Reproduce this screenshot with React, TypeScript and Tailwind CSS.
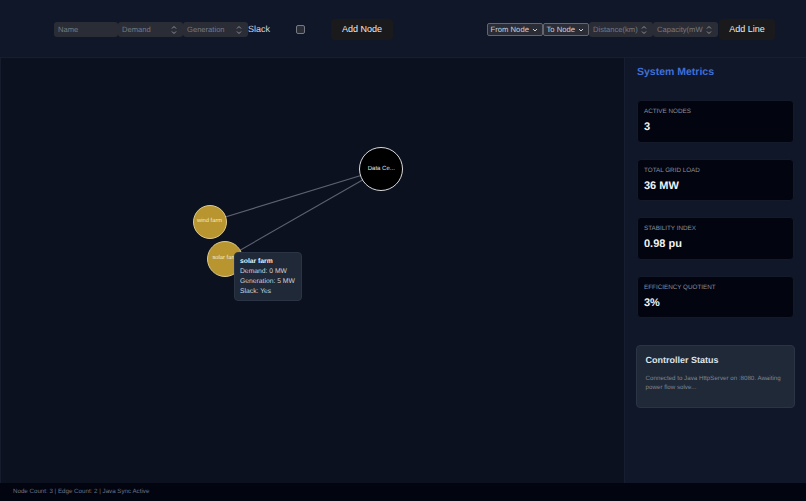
import React from "react";

function Spin() {
  return (
    <svg width="6" height="10" viewBox="0 0 6 10" fill="none" stroke="#9a9ca3" strokeWidth="0.9" className="shrink-0">
      <path d="M1 3.5 L3 1.5 L5 3.5" />
      <path d="M1 6.5 L3 8.5 L5 6.5" />
    </svg>
  );
}

function NumField({ label, w }: { label: string; w: string }) {
  return (
    <div className={`${w} h-[15px] bg-[#2a2d35] rounded-[3px] flex items-center justify-between pl-[4px] pr-[6px] text-[7.6px] text-[#767983] overflow-hidden whitespace-nowrap`}>
      <span>{label}</span>
      <Spin />
    </div>
  );
}

function Sel({ label, w }: { label: string; w: string }) {
  return (
    <div className={`${w} h-[13px] bg-[#2a2d35] border border-[#63666f] rounded-[2px] flex items-center justify-between pl-[2.5px] pr-[4px] text-[7.7px] text-[#d0d1d5] whitespace-nowrap`}>
      <span>{label}</span>
      <svg width="6" height="4" viewBox="0 0 6 4" fill="none" stroke="#d0d1d5" strokeWidth="1"><path d="M1 1 L3 3 L5 1" /></svg>
    </div>
  );
}

function Metric({ label, value }: { label: string; value: string }) {
  return (
    <div className="h-[42.6px] bg-[#02040f] border border-[#141a2a] rounded-[4px] pl-[6px] pt-[6px]">
      <div className="text-[6.3px] leading-[10px] text-[#8a8f9c] uppercase">{label}</div>
      <div className="text-[11px] leading-[14px] mt-[3px] font-bold text-[#f1f3f6]">{value}</div>
    </div>
  );
}

export default function App() {
  return (
    <div className="w-[806px] h-[501px] flex flex-col bg-[#0b111e] overflow-hidden antialiased [text-rendering:geometricPrecision]" style={{ fontFamily: "'Liberation Sans', Arial, sans-serif" }}>
      <header className="h-[58px] shrink-0 bg-[#101729] border-b border-[#171e31] flex items-center justify-between pl-[54px] pr-[31px] pt-[2px]">
        <div className="flex items-center">
          <div className="w-[64px] h-[15px] bg-[#2a2d35] rounded-[3px] flex items-center pl-[4px] text-[7.6px] text-[#767983]">Name</div>
          <NumField label="Demand" w="w-[65px]" />
          <NumField label="Generation" w="w-[65px]" />
          <span className="w-[48px] text-[9px] text-[#d5d8e0]">Slack</span>
          <span className="w-[9px] h-[9px] bg-[#2a2d35] border border-[#777a83] rounded-[2px]" />
          <button className="ml-[26px] w-[62px] h-[21px] bg-[#1a1a1c] rounded-[4px] text-[9px] text-[#ececec]">Add Node</button>
        </div>
        <div className="flex items-center">
          <Sel label="From Node" w="w-[56px]" />
          <Sel label="To Node" w="w-[46px]" />
          <NumField label="Distance(km)" w="w-[64px]" />
          <NumField label="Capacity(mW" w="w-[65px]" />
          <button className="ml-[1px] w-[56px] h-[21px] bg-[#1a1a1c] rounded-[4px] text-[9px] text-[#ececec]">Add Line</button>
        </div>
      </header>

      <div className="flex-1 flex min-h-0">
        <main className="flex-1 relative bg-[#0b111e] border-l border-[#161c2b]">
          <svg className="absolute inset-0" width="623" height="425" fill="none">
            <line x1="208.8" y1="163.7" x2="380.3" y2="111.2" stroke="#5c6270" strokeWidth="1.1" />
            <line x1="224.3" y1="200.7" x2="380.3" y2="111.2" stroke="#5c6270" strokeWidth="1.1" />
          </svg>
          <div className="absolute left-[358.3px] top-[89.2px] w-[44px] h-[44px] rounded-full bg-black border border-[#d9dadd] flex items-center justify-center text-[6px] text-[#e2e2e2]">Data Ce...</div>
          <div className="absolute left-[191.6px] top-[146.5px] w-[34px] h-[34px] rounded-full bg-[#b8952f] border border-[#dcc98c] flex items-center justify-center text-[5.8px] text-[#f3ead0]">wind farm</div>
          <div className="absolute left-[206.3px] top-[182.7px] w-[36px] h-[36px] rounded-full bg-[#b8952f] border border-[#dcc98c] flex items-center justify-center text-[5.8px] text-[#f3ead0]">solar farm</div>
          <div className="absolute left-[233px] top-[194px] w-[68px] h-[48.7px] rounded-[4px] bg-[#1f2937] border border-[#2a3445] pl-[5px] pt-[4px] text-[6.75px] leading-[10.1px] text-[#cfd3da]">
            <div className="font-bold text-[#f1f3f6]">solar farm</div>
            <div>Demand: 0 MW</div>
            <div>Generation: 5 MW</div>
            <div>Slack: Yes</div>
          </div>
        </main>

        <aside className="w-[182px] shrink-0 bg-[#101729] border-l border-[#171e31] pl-[12px] pr-[12px] pt-[8px] flex flex-col">
          <h2 className="text-[10.5px] leading-[12px] font-bold text-[#3f6fd6]">System Metrics</h2>
          <div className="mt-[22px] flex flex-col gap-[16px]">
            <Metric label="Active Nodes" value="3" />
            <Metric label="Total Grid Load" value="36 MW" />
            <Metric label="Stability Index" value="0.98 pu" />
            <Metric label="Efficiency Quotient" value="3%" />
          </div>
          <div className="mt-[27px] -ml-[1px] w-[159px] h-[63px] bg-[#1f2937] border border-[#2a3445] rounded-[4px] pl-[8.6px] pt-[8px]">
            <h3 className="text-[9px] leading-[12px] font-bold text-[#dfe3ea]">Controller Status</h3>
            <p className="mt-[7.6px] text-[6.2px] leading-[9.4px] text-[#7d8594] pr-[6px]">Connected to Java HttpServer on :8080. Awaiting power flow solve...</p>
          </div>
        </aside>
      </div>

      <footer className="h-[18px] shrink-0 bg-[#02040f] flex items-center pl-[13px] text-[6.2px] text-[#6d7382]">Node Count: 3 | Edge Count: 2 | Java Sync Active</footer>
    </div>
  );
}
